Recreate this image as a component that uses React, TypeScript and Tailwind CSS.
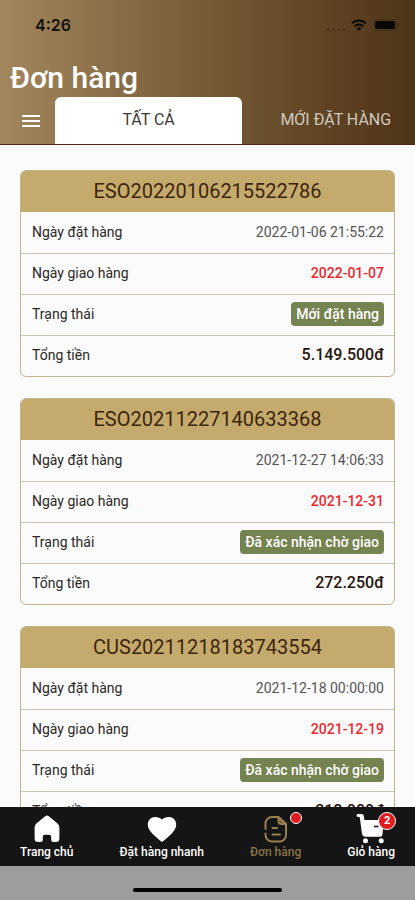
import type { ReactNode } from "react";

// ─── Data ──────────────────────────────────────────────────────────────────────

type Order = {
  code: string;
  orderedAt: string;
  deliveryDate: string;
  status: string;
  total: string;
};

const orders: Order[] = [
  {
    code: "ESO20220106215522786",
    orderedAt: "2022-01-06 21:55:22",
    deliveryDate: "2022-01-07",
    status: "Mới đặt hàng",
    total: "5.149.500đ",
  },
  {
    code: "ESO20211227140633368",
    orderedAt: "2021-12-27 14:06:33",
    deliveryDate: "2021-12-31",
    status: "Đã xác nhận chờ giao",
    total: "272.250đ",
  },
  {
    code: "CUS20211218183743554",
    orderedAt: "2021-12-18 00:00:00",
    deliveryDate: "2021-12-19",
    status: "Đã xác nhận chờ giao",
    total: "318.000đ",
  },
];

// ─── Icons ─────────────────────────────────────────────────────────────────────

function WifiIcon() {
  return (
    <svg viewBox="0 0 16 12" className="w-4 h-3" fill="none" stroke="#0a0805" strokeWidth={2}>
      <path d="M1 4.4a10 10 0 0 1 14 0" />
      <path d="M3.6 7.2a6.3 6.3 0 0 1 8.8 0" />
      <path d="M8 11.8L5.6 9.4a3.5 3.5 0 0 1 4.8 0z" fill="#0a0805" stroke="none" />
    </svg>
  );
}

function BatteryIcon() {
  return (
    <svg viewBox="0 0 26 12" className="w-[26px] h-3">
      <rect x="0.5" y="0.5" width="23" height="11" rx="3" fill="none" stroke="#0a0805" strokeOpacity={0.2} />
      <rect x="2" y="2" width="20" height="8" rx="1.5" fill="#0a0805" />
      <path d="M24.5 4v4c.9-.4 1.3-1.2 1.3-2s-.4-1.6-1.3-2z" fill="#0a0805" fillOpacity={0.25} />
    </svg>
  );
}

function MenuIcon() {
  return (
    <svg viewBox="0 0 20 14" className="w-5 h-3.5" fill="#fff">
      <rect x="1" y="1" width="18" height="2" />
      <rect x="1" y="6" width="18" height="2" />
      <rect x="1" y="11" width="18" height="2" />
    </svg>
  );
}

function HomeIcon() {
  return (
    <svg viewBox="0 0 28 28" className="w-7 h-7" fill="#fff">
      <path d="M12.2 1.2a3 3 0 0 1 3.6 0l8.8 7.4a5 5 0 0 1 1.8 3.8v11.1a3.500 3.500 0 0 1-3.5 3.5h-2.7a2 2 0 0 1-2-2v-3.200a2 2 0 0 0-2-2h-4.400a2 2 0 0 0-2 2V25a2 2 0 0 1-2 2H5.100a3.500 3.500 0 0 1-3.500-3.500V12.400a5 5 0 0 1 1.800-3.800z" />
    </svg>
  );
}

function HeartIcon() {
  return (
    <svg viewBox="0 0 30 28" className="w-[30px] h-7" fill="#fff">
      <path d="M15 27C12.5 25 9 22.5 5.5 18.7 2.6 15.6.8 13 .8 9.4.8 5.2 4 2 8.2 2c2.700 0 5.200 1 6.800 2.600C16.600 3 19.100 2 21.800 2 26 2 29.200 5.200 29.200 9.400c0 3.600-1.800 6.200-4.700 9.300C21 22.500 17.500 25 15 27z" />
    </svg>
  );
}

function OrderIcon() {
  return (
    <svg viewBox="0 0 24 28" className="w-6 h-7" fill="none" stroke="#99804f" strokeWidth={2} strokeLinecap="round" strokeLinejoin="round">
      <path d="M1.5 14V8.5A6.5 6.5 0 0 1 8 2h6.5l7.5 7v11a6.5 6.5 0 0 1-6.5 6.5H8A6.5 6.5 0 0 1 1.5 20v-1.5" />
      <path d="M14.5 2.500v3.500a3 3 0 0 0 3 3h4z" fill="#99804f" fillOpacity={0.5} />
      <path d="M8.5 13H13M8.500 19.500h7.500" />
    </svg>
  );
}

function CartIcon() {
  return (
    <svg viewBox="0 0 30 30" className="w-[30px] h-[30px]" fill="#fff">
      <path d="M2 0h3.700a2 2 0 0 1 2 1.600L8.400 6H28l-1.600 14.700a2.300 2.300 0 0 1-2.300 2H9.400A3.500 3.500 0 0 1 6 19.800L3.700 2.900H2A1.400 1.400 0 0 1 2 0z" />
      <path d="M18 12.500h4.500" stroke="#151515" strokeWidth={1.6} />
      <circle cx="9.5" cy="26.8" r="2.5" />
      <circle cx="25.2" cy="26.8" r="2.5" />
    </svg>
  );
}

// ─── Parts ─────────────────────────────────────────────────────────────────────

function OrderRow({ label, children }: { label: string; children: ReactNode }) {
  return (
    <tr className="h-[41px] border-b border-[#cbc5b5] last:border-b-0">
      <th scope="row" className="pb-px pl-[11px] text-left text-sm font-normal text-[#2b2826]">
        {label}
      </th>
      <td className="pr-2.5 pb-px text-right">{children}</td>
    </tr>
  );
}

function OrderCard({ order }: { order: Order }) {
  return (
    <article className="overflow-hidden rounded-md border border-[#c0b594] bg-[#fbfbfb]">
      <h2 className="bg-[#c5aa6d] text-center text-xl leading-[41px] text-[#3d2508]">{order.code}</h2>
      <table className="w-full border-collapse">
        <tbody>
          <OrderRow label="Ngày đặt hàng">
            <span className="text-sm text-[#555]">{order.orderedAt}</span>
          </OrderRow>
          <OrderRow label="Ngày giao hàng">
            <span className="text-sm font-medium text-[#f0262d]">{order.deliveryDate}</span>
          </OrderRow>
          <OrderRow label="Trạng thái">
            <span className="inline-block rounded bg-[#74834f] px-[5px] text-sm leading-6 font-medium text-white">
              {order.status}
            </span>
          </OrderRow>
          <OrderRow label="Tổng tiền">
            <span className="text-base font-medium text-[#26150f]">{order.total}</span>
          </OrderRow>
        </tbody>
      </table>
    </article>
  );
}

function NavItem({ label, icon, active, badge }: { label: string; icon: ReactNode; active?: boolean; badge?: ReactNode }) {
  return (
    <a
      href="#"
      className={`flex flex-col items-center text-xs leading-4 font-medium ${active ? "text-[#8a7347]" : "text-white"}`}
    >
      <span className="relative flex h-[30px] items-center justify-center">
        {icon}
        {badge}
      </span>
      {label}
    </a>
  );
}

// ─── Main Page ─────────────────────────────────────────────────────────────────

export default function App() {
  return (
    <div className="flex h-screen flex-col bg-[#fbfbfb] font-['Roboto','Noto_Sans',sans-serif]">
      {/* Header */}
      <header className="shrink-0 overflow-hidden border-b border-[#4a2410] bg-linear-to-r from-[#a2875d] via-[#755a35] via-50% to-[#4e3417]">
        <div className="flex h-[50px] items-center justify-between pr-4 pl-[35px]">
          <span className="font-['Inter',sans-serif] text-base font-semibold text-[#15100a]">4:26</span>
          <div className="flex items-center gap-1.5">
            <span className="flex gap-0.5 pt-2">
              <i className="size-[3px] rounded-full bg-black/20" />
              <i className="size-[3px] rounded-full bg-black/20" />
              <i className="size-[3px] rounded-full bg-black/20" />
              <i className="size-[3px] rounded-full bg-black/20" />
            </span>
            <WifiIcon />
            <BatteryIcon />
          </div>
        </div>

        <h1 className="px-2.5 pt-2.5 pb-px text-3xl leading-9 font-medium text-white">Đơn hàng</h1>

        <div className="flex h-[47px]">
          <button type="button" aria-label="Menu" className="flex w-[55px] shrink-0 items-center justify-center pl-1.5">
            <MenuIcon />
          </button>
          <div role="tablist" className="flex min-w-0 flex-1">
            <button
              type="button"
              role="tab"
              aria-selected="true"
              className="w-[52%] shrink-0 rounded-t-md bg-white pb-0.5 text-base text-[#3f3834]"
            >
              TẤT CẢ
            </button>
            <button
              type="button"
              role="tab"
              aria-selected="false"
              className="w-[52%] shrink-0 pb-0.5 text-base text-[#cfc8be]"
            >
              MỚI ĐẶT HÀNG
            </button>
          </div>
        </div>
      </header>

      {/* Orders */}
      <main className="flex min-h-0 flex-1 flex-col gap-[21px] overflow-y-auto px-5 pt-[25px] pb-5 [scrollbar-width:none] *:shrink-0">
        {orders.map((order) => (
          <OrderCard key={order.code} order={order} />
        ))}
      </main>

      {/* Bottom navigation */}
      <nav className="flex h-[59px] shrink-0 justify-between bg-[#151515] px-5 pt-[7px]">
        <NavItem label="Trang chủ" icon={<HomeIcon />} />
        <NavItem label="Đặt hàng nhanh" icon={<HeartIcon />} />
        <NavItem
          label="Đơn hàng"
          icon={<OrderIcon />}
          active
          badge={<span className="absolute -top-0.5 -right-3.5 size-3 rounded-full border border-white bg-[#e01a1e]" />}
        />
        <NavItem
          label="Giỏ hàng"
          icon={<CartIcon />}
          badge={
            <span className="absolute -top-0.5 -right-2.5 flex size-[18px] items-center justify-center rounded-full border border-white bg-[#e01a1e] text-[11px] font-bold text-white">
              2
            </span>
          }
        />
      </nav>
      <div className="flex h-[34px] shrink-0 items-end justify-center bg-[#9d9d9d] pb-2">
        <div className="h-1 w-[36%] rounded-full bg-black" />
      </div>
    </div>
  );
}
